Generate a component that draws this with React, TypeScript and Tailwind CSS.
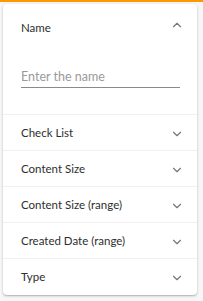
import { ChevronDown, ChevronUp } from "lucide-react";

const sections = ["Check List", "Content Size", "Content Size (range)", "Created Date (range)", "Type"];

export default function App() {
  return (
    <div
      className="h-[301px] w-[203px] border-t-2 border-[#ff9800] bg-[#f7f7f7] pt-[2px] pl-[3px]"
      style={{ fontFamily: "Lato, 'Noto Sans', sans-serif" }}
    >
      <div className="w-[194px] rounded-[4px] bg-white pb-px shadow-[0_1px_3px_rgba(0,0,0,0.2),0_1px_1px_rgba(0,0,0,0.12)]">
        {/* expanded section */}
        <div className="flex h-12 items-center justify-between pl-[18px] pr-[13px]">
          <span className="text-[11.5px] text-[#2e2e2e]">Name</span>
          <ChevronUp size={14} strokeWidth={2} className="-mt-[6px] text-[#777]" />
        </div>
        <div className="px-[18px] pb-[26px] pt-[13px]">
          <input
            placeholder="Enter the name"
            className="block h-[23px] w-[159px] border-b border-[#8a8a8a] text-[12.5px] text-[#333] outline-none placeholder:text-[#9a9a9a]"
          />
        </div>

        {sections.map((label) => (
          <div
            key={label}
            className="flex h-[36px] items-center justify-between border-t border-[#f0f0f0] pl-[18px] pr-[13px]"
          >
            <span className="text-[11.5px] text-[#2e2e2e]">{label}</span>
            <ChevronDown size={14} strokeWidth={2} className="mt-[2px] text-[#777]" />
          </div>
        ))}
      </div>
    </div>
  );
}
